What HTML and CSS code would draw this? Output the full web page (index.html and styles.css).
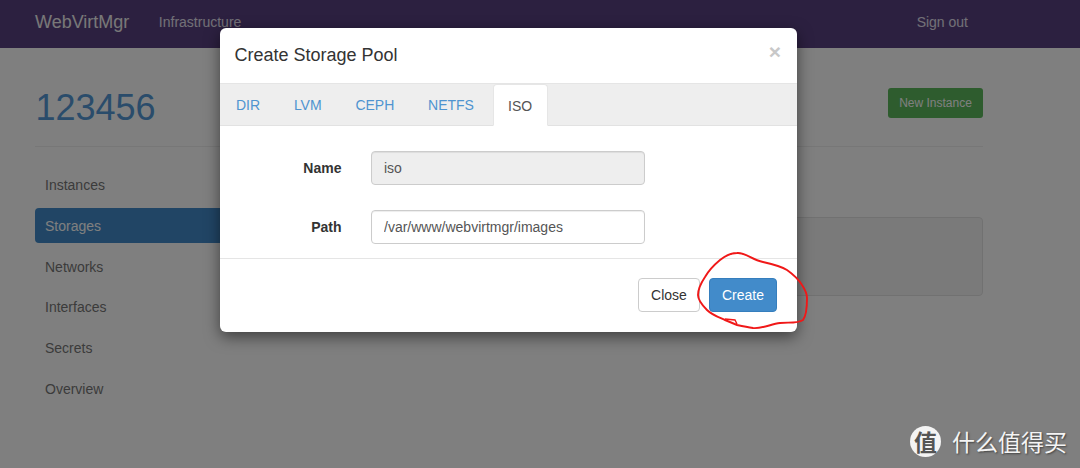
FILE: index.html
```html
<!DOCTYPE html>
<html lang="en">
<head>
<meta charset="utf-8">
<title>WebVirtMgr</title>
<link rel="stylesheet" href="styles.css">
</head>
<body>
<header class="navbar">
  <a class="brand">WebVirtMgr</a>
  <a class="nav-link">Infrastructure</a>
  <a class="nav-link signout">Sign out</a>
</header>
<main class="container">
  <div class="page-head">
    <h1 class="title">123456</h1>
    <a class="btn-new">New Instance</a>
  </div>
  <div class="columns">
    <nav class="side">
      <a class="side-item">Instances</a>
      <a class="side-item active">Storages</a>
      <a class="side-item">Networks</a>
      <a class="side-item">Interfaces</a>
      <a class="side-item">Secrets</a>
      <a class="side-item">Overview</a>
    </nav>
    <div class="content"><div class="well"></div></div>
  </div>
</main>
<div class="backdrop"></div>
<section class="modal">
  <div class="modal-head">
    <h4 class="modal-title">Create Storage Pool</h4>
    <span class="close-x">×</span>
  </div>
  <div class="tabs">
    <a class="tab">DIR</a>
    <a class="tab">LVM</a>
    <a class="tab">CEPH</a>
    <a class="tab">NETFS</a>
    <a class="tab current">ISO</a>
  </div>
  <div class="modal-body">
    <div class="row">
      <label class="label">Name</label>
      <input class="field readonly" value="iso" readonly>
    </div>
    <div class="row">
      <label class="label">Path</label>
      <input class="field" value="/var/www/webvirtmgr/images">
    </div>
  </div>
  <div class="modal-foot">
    <button class="btn btn-close">Close</button>
    <button class="btn btn-create">Create</button>
  </div>
</section>
<svg class="scribble" width="130" height="90" viewBox="690 245 130 90" fill="none">
  <path d="M737 253C745 252 752 260 763 262C772 264 781 266 787 270C794 275 799 280 802 285C806 291 807 294 807 298C807 306 806 316 803 320C797 324 788 322 780 323C771 324 762 329 753 328C747 327 742 326 737 325L725 320C718 317 712 315 707 310C701 304 698 300 698 295C698 288 701 283 705 277C709 270 714 265 720 260C725 256 731 253 737 253Z" stroke="#f01818" stroke-width="1.9"/>
  <path d="M725 319L735 320L737 324" stroke="#f01818" stroke-width="1.4"/>
</svg>
<div class="watermark">
  <span class="wm-badge">值</span>
  <span class="wm-text">什么值得买</span>
</div>
</body>
</html>
```
FILE: styles.css
```css
* { box-sizing: border-box; }
html, body { height: 100%; }
body {
  margin: 0;
  width: 1080px;
  height: 468px;
  overflow: hidden;
  background: #fff;
  color: #333;
  font-family: "Liberation Sans", Arial, sans-serif;
  font-size: 14px;
  line-height: 20px;
}
.navbar {
  height: 48px;
  background: #584080;
  display: flex;
  align-items: center;
  padding: 0 112px 4px 35px;
  color: #ddd;
}
.brand { font-size: 18px; margin-right: 29.5px; color: #f0f0f0; }
.nav-link { font-size: 14px; color: #e4e0ee; }
.signout { margin-left: auto; }
.container { padding: 0 97px 0 35px; }
.page-head {
  height: 99px;
  border-bottom: 1px solid #eee;
  display: flex;
  align-items: flex-start;
  justify-content: space-between;
}
.title {
  margin: 40px 0 0 0.5px;
  font-size: 36px;
  line-height: 40px;
  font-weight: 400;
  color: #5599d6;
}
.btn-new {
  margin-top: 40px;
  height: 30px;
  width: 95px;
  background: #5cb85c;
  border-radius: 3px;
  color: #fff;
  font-size: 12px;
  line-height: 30px;
  text-align: center;
}
.columns { display: flex; }
.side { width: 220px; padding-top: 20px; flex: none; display: flex; flex-direction: column; gap: 5.8px; }
.side-item {
  height: 35px;
  line-height: 37px;
  padding-left: 10px;
  border-radius: 4px;
  color: #777;
}
.side-item.active { background: #428bca; color: #fff; }
.content { flex: 1; padding-top: 69.5px; }
.well {
  height: 79px;
  background: #f5f5f5;
  border: 1px solid #e3e3e3;
  border-radius: 4px;
  margin-left: 20px;
}
.backdrop {
  position: absolute;
  inset: 0;
  background: rgba(0, 0, 0, .5);
}
.modal {
  position: absolute;
  left: 220px;
  top: 28px;
  width: 577px;
  height: 304px;
  background: #fff;
  border-radius: 6px;
  box-shadow: 0 5px 15px rgba(0, 0, 0, .5);
  overflow: hidden;
}
.modal-head {
  height: 56px;
  padding: 0 15px 2px 14.5px;
  border-bottom: 1px solid #e5e5e5;
  display: flex;
  align-items: center;
  justify-content: space-between;
}
.modal-title {
  margin: 0;
  font-size: 18px;
  font-weight: 400;
  color: #333;
}
.close-x {
  font-size: 21px;
  font-weight: 700;
  color: #c8c8c8;
  margin: -6px 0 0;
  position: relative;
  left: -1px;
}
.tabs {
  height: 42px;
  background: #eee;
  border-bottom: 1px solid #e2e2e2;
  display: flex;
  align-items: flex-end;
}
.tab {
  height: 41px;
  line-height: 42px;
  padding: 0 16px;
  margin-right: 1.75px;
  color: #4f94d0;
  font-size: 14px;
  border-radius: 4px 4px 0 0;
}
.tab.current {
  background: #fff;
  border: 1px solid #e6e6e6;
  border-bottom-color: #fff;
  margin-bottom: -1px;
  margin-left: 1px;
  height: 42px;
  width: 55px;
  padding: 0;
  text-align: center;
  color: #555;
}
.modal-body {
  height: 133px;
  padding-top: 25px;
  display: flex;
  flex-direction: column;
  gap: 25px;
  border-bottom: 1px solid #e5e5e5;
}
.row { display: flex; align-items: center; height: 34px; }
.label {
  width: 121.5px;
  text-align: right;
  font-weight: 700;
  color: #333;
  margin-right: 29.5px;
}
.field {
  width: 274px;
  height: 34px;
  padding: 6px 12px;
  border: 1px solid #ccc;
  border-radius: 4px;
  box-shadow: inset 0 1px 1px rgba(0, 0, 0, .075);
  font: 14px/20px "Liberation Sans", Arial, sans-serif;
  color: #555;
  background: #fff;
  outline: none;
}
.field.readonly { background: #eee; }
.modal-foot {
  display: flex;
  justify-content: flex-end;
  gap: 9px;
  padding: 19px 20px 0 0;
}
.btn {
  height: 34px;
  border-radius: 4px;
  font: 14px/20px "Liberation Sans", Arial, sans-serif;
  padding: 6px 12px;
  border: 1px solid #ccc;
}
.btn-close { background: #fff; color: #333; width: 62px; }
.btn-create { background: #428bca; border-color: #357ebd; color: #fff; width: 68px; }
.scribble { position: absolute; left: 690px; top: 245px; }
.watermark {
  position: absolute;
  left: 910px;
  top: 426px;
  display: flex;
  align-items: center;
  gap: 11px;
}
.wm-badge {
  width: 31px;
  height: 31px;
  border-radius: 50%;
  background: #f4f4f4;
  color: #555;
  font: 700 23px/31px "Noto Sans CJK SC", sans-serif;
  text-align: center;
}
.wm-text {
  color: #f4f4f4;
  font: 400 23px/31px "Noto Sans CJK SC", sans-serif;
  text-shadow: 1px 1px 2px rgba(0, 0, 0, .5);
}
```
